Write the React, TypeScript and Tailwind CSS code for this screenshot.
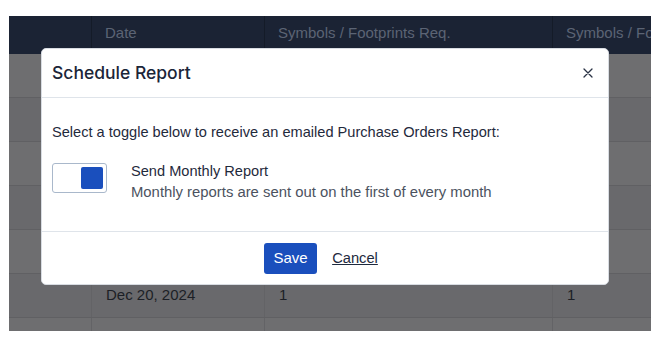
import React from "react";

const rows = [
  { date: "", a: "", b: "" },
  { date: "", a: "", b: "" },
  { date: "", a: "", b: "" },
  { date: "", a: "", b: "" },
  { date: "", a: "", b: "" },
  { date: "Dec 20, 2024", a: "1", b: "1" },
  { date: "", a: "", b: "" },
];

export default function App() {
  return (
    <div
      className="relative w-[661px] h-[338px] bg-white overflow-hidden"
      style={{ fontFamily: "'Liberation Sans', Arial, sans-serif" }}
    >
      <div className="pt-[16px] pl-[9px] pr-[10px]">
        <div className="h-[315px] overflow-hidden">
          <div className="grid grid-cols-[83px_173px_288px_1fr] h-[38px] bg-[#1b2334] text-[15px] text-[#5c6474]">
            <div className="border-r border-[#141b28]" />
            <div className="border-r border-[#141b28] pl-[13px] pb-[3px] flex items-center">Date</div>
            <div className="border-r border-[#141b28] pl-[13px] pb-[3px] flex items-center whitespace-nowrap">Symbols / Footprints Req.</div>
            <div className="pl-[13px] pb-[3px] flex items-center whitespace-nowrap overflow-hidden">Symbols / Fo</div>
          </div>
          {rows.map((r, i) => (
            <div
              key={i}
              className={`grid grid-cols-[83px_173px_288px_1fr] h-[44px] border-b border-[#606063] text-[15px] text-[#1c1f26] ${
                i % 2 === 0 ? "bg-[#6e6e70]" : "bg-[#69696c]"
              }`}
            >
              <div className="border-r border-[#636366]" />
              <div className="border-r border-[#636366] pl-[14px] flex items-center">{r.date}</div>
              <div className="border-r border-[#636366] pl-[14px] flex items-center">{r.a}</div>
              <div className="pl-[14px] flex items-center">{r.b}</div>
            </div>
          ))}
        </div>
      </div>

      <div className="absolute left-[41px] top-[48px] w-[568px] h-[237px] bg-white rounded-[5px] border border-[#d8dce2] flex flex-col">
        <div className="h-[49px] flex items-center justify-between pl-[10px] pr-[15px] border-b border-[#dfe4ea]">
          <div
            className="text-[17.5px] font-medium text-[#1b2538]"
            style={{ fontFamily: "Inter, 'Liberation Sans', sans-serif" }}
          >
            Schedule Report
          </div>
          <svg width="10" height="10" viewBox="0 0 10 10">
            <path d="M1 1L9 9M9 1L1 9" stroke="#2a3345" strokeWidth="1.3" strokeLinecap="round" />
          </svg>
        </div>
        <div className="flex-1 pl-[10px] pt-[23px] border-b border-[#dfe4ea]">
          <div className="text-[14.6px] leading-[22px] text-[#1f2a3c]">
            Select a toggle below to receive an emailed Purchase Orders Report:
          </div>
          <div className="flex mt-[17px]">
            <div className="mt-[3px] w-[55px] h-[30px] border border-[#a9b8cb] rounded-[3px] bg-white flex items-center justify-end pr-[3px]">
              <div className="w-[22px] h-[22px] rounded-[2px] bg-[#1a4fbd]" />
            </div>
            <div className="ml-[24px] pt-[1px]">
              <div className="text-[14.6px] leading-[20px] text-[#1f2a3c]">Send Monthly Report</div>
              <div className="text-[14.85px] leading-[22px] text-[#4b5260]">
                Monthly reports are sent out on the first of every month
              </div>
            </div>
          </div>
        </div>
        <div className="h-[52px] flex items-center justify-center gap-[15px] pr-[8px]">
          <button className="w-[53px] h-[31px] rounded-[3px] bg-[#1a4fbd] text-white text-[15px]">Save</button>
          <button className="text-[14.7px] text-[#1e2a3e] underline">Cancel</button>
        </div>
      </div>
    </div>
  );
}
